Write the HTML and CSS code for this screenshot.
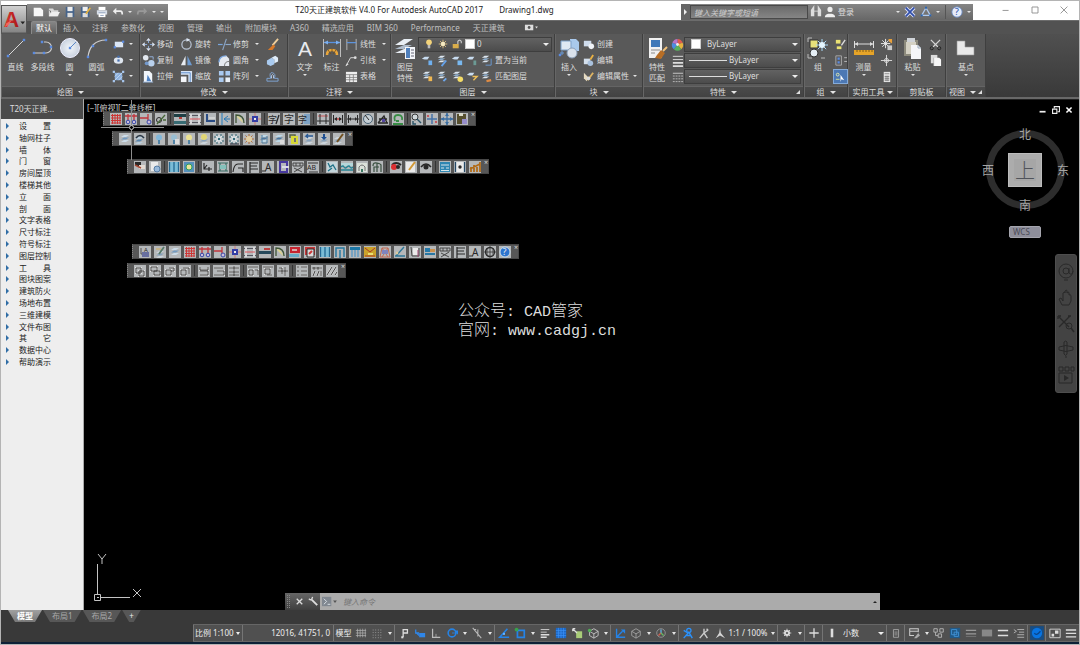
FILE: index.html
```html
<!DOCTYPE html>
<html lang="zh-CN">
<head>
<meta charset="utf-8">
<title>T20天正建筑软件 V4.0 For Autodesk AutoCAD 2017</title>
<link rel="stylesheet" href="styles.css">
<script src="icons.js" defer></script>
</head>
<body>
<div class="window">
  <header class="top">
    <button class="app" aria-label="应用程序菜单">
      <svg viewBox="0 0 26 26" width="24" height="25"><defs><linearGradient id="red" x2="1"><stop offset="0" stop-color="#e2382f"/><stop offset="1" stop-color="#a5171b"/></linearGradient></defs><text x="2" y="20" font-family="Liberation Sans" font-weight="bold" font-size="23" fill="url(#red)">A</text><path d="M3 20l4-2 4-6-6 4z" fill="#f0675c"/><path d="M20 14h5l-2.500 3z" fill="#222"/></svg>
    </button>
    <div class="titlebar">
      <nav class="qat" data-tools="new open save saveas print undo dd redo dd dd2"></nav>
      <h1 class="title"><span>T20天正建筑软件 V4.0 For Autodesk AutoCAD 2017</span><span>Drawing1.dwg</span></h1>
      <div class="info">
        <button class="tri-r" aria-label="展开"></button>
        <input class="search" type="text" aria-label="搜索" placeholder="键入关键字或短语">
        <button data-icon="binoc" aria-label="查找"></button>
        <button class="login" data-icon="user"><span>登录</span></button>
        <button class="ar" aria-label="登录菜单"></button>
        <button data-icon="exch" aria-label="应用商店"></button>
        <button data-icon="a360" aria-label="A360"></button><button class="ar" aria-label="更多"></button>
        <span class="vsep"></span>
        <button data-icon="help" aria-label="帮助"></button><button class="ar" aria-label="帮助菜单"></button>
      </div>
      <div class="winbtns"><button data-icon="wmin" aria-label="最小化"></button><button data-icon="wmax" aria-label="最大化"></button><button data-icon="wclose" aria-label="关闭"></button></div>
    </div>
    <nav class="tabs">
      <button class="on">默认</button><button>插入</button><button>注释</button><button>参数化</button><button>视图</button><button>管理</button><button>输出</button><button>附加模块</button><button>A360</button><button>精选应用</button><button>BIM 360</button><button>Performance</button><button>天正建筑</button><button class="rec" data-icon="rec" aria-label="最小化功能区"></button>
    </nav>
  </header>

  <main class="ribbon">
    <section class="panel draw">
      <div class="body">
        <button class="big" data-icon="line"><span>直线</span></button>
        <button class="big" data-icon="pline"><span>多段线</span></button>
        <button class="big drop" data-icon="circle"><span>圆</span></button>
        <button class="big drop" data-icon="arc"><span>圆弧</span></button>
        <div class="col"><button class="sm drop" data-icon="rect" aria-label="矩形"></button><button class="sm drop" data-icon="ellipse" aria-label="椭圆"></button><button class="sm drop" data-icon="hatch" aria-label="图案填充"></button></div>
      </div>
      <button class="foot drop">绘图</button>
    </section>
    <section class="panel modify">
      <div class="body">
        <div class="col"><button class="sm" data-icon="move"><span>移动</span></button><button class="sm" data-icon="copy"><span>复制</span></button><button class="sm" data-icon="stretch"><span>拉伸</span></button></div>
        <div class="col"><button class="sm" data-icon="rotate"><span>旋转</span></button><button class="sm" data-icon="mirror"><span>镜像</span></button><button class="sm" data-icon="scale"><span>缩放</span></button></div>
        <div class="col"><button class="sm drop" data-icon="trim"><span>修剪</span></button><button class="sm drop" data-icon="fillet"><span>圆角</span></button><button class="sm drop" data-icon="array"><span>阵列</span></button></div>
        <div class="col"><button class="sm" data-icon="erase" aria-label="删除"></button><button class="sm" data-icon="explode" aria-label="分解"></button><button class="sm" data-icon="offset" aria-label="偏移"></button></div>
      </div>
      <button class="foot drop">修改</button>
    </section>
    <section class="panel note">
      <div class="body">
        <button class="big drop" data-icon="text"><span>文字</span></button>
        <button class="big" data-icon="dim"><span>标注</span></button>
        <div class="col"><button class="sm drop" data-icon="linear"><span>线性</span></button><button class="sm drop" data-icon="leader"><span>引线</span></button><button class="sm" data-icon="table"><span>表格</span></button></div>
      </div>
      <button class="foot drop">注释</button>
    </section>
    <section class="panel layers">
      <div class="body">
        <button class="big" data-icon="layerprop"><span>图层<br>特性</span></button>
        <div class="col grow">
          <label class="combo"><i data-icon="bulb"></i><i data-icon="sun"></i><i data-icon="lock"></i><i class="swatch"></i><select aria-label="图层"><option>0</option></select></label>
          <div class="row"><span class="tools" data-tools="l1 l2 l3 l4"></span><button class="sm" data-icon="l5"><span>置为当前</span></button></div>
          <div class="row"><span class="tools" data-tools="l6 l7 l8 l9"></span><button class="sm" data-icon="l10"><span>匹配图层</span></button></div>
        </div>
      </div>
      <button class="foot drop">图层</button>
    </section>
    <section class="panel block">
      <div class="body">
        <button class="big drop" data-icon="insert"><span>插入</span></button>
        <div class="col"><button class="sm" data-icon="bcreate"><span>创建</span></button><button class="sm" data-icon="bedit"><span>编辑</span></button><button class="sm drop" data-icon="battr"><span>编辑属性</span></button></div>
      </div>
      <button class="foot drop">块</button>
    </section>
    <section class="panel props">
      <div class="body">
        <button class="big" data-icon="match"><span>特性<br>匹配</span></button>
        <div class="col"><i data-icon="wheel"></i><i data-icon="weights"></i><i data-icon="ltypes"></i></div>
        <div class="col grow">
          <label class="combo"><i class="swatch"></i><select aria-label="颜色"><option>ByLayer</option></select></label>
          <label class="combo"><i class="rule"></i><select aria-label="线宽"><option>ByLayer</option></select></label>
          <label class="combo"><i class="rule"></i><select aria-label="线型"><option>ByLayer</option></select></label>
        </div>
      </div>
      <button class="foot drop corner">特性</button>
    </section>
    <section class="panel group">
      <div class="body">
        <button class="big" data-icon="group"><span>组</span></button>
        <div class="col"><button class="sm" data-icon="g1" aria-label="取消编组"></button><button class="sm" data-icon="g2" aria-label="组编辑"></button><button class="sm lit" data-icon="g3" aria-label="组选择"></button></div>
      </div>
      <button class="foot drop">组</button>
    </section>
    <section class="panel utils">
      <div class="body">
        <button class="big drop" data-icon="measure"><span>测量</span></button>
        <div class="col"><button class="sm" data-icon="quick" aria-label="快速选择"></button><button class="sm" data-icon="point" aria-label="点"></button><button class="sm" data-icon="calc" aria-label="计算器"></button></div>
      </div>
      <button class="foot drop">实用工具</button>
    </section>
    <section class="panel clip">
      <div class="body">
        <button class="big drop" data-icon="paste"><span>粘贴</span></button>
        <div class="col"><button class="sm" data-icon="cut" aria-label="剪切"></button><button class="sm" data-icon="copyclip" aria-label="复制"></button></div>
      </div>
      <button class="foot">剪贴板</button>
    </section>
    <section class="panel view">
      <div class="body"><button class="big drop" data-icon="base"><span>基点</span></button></div>
      <button class="foot drop corner">视图</button>
    </section>
  </main>

  <div class="work">
    <aside class="side">
      <h2>T20天正建...</h2>
      <ul>
        <li><a href="#">设 置</a></li><li><a href="#">轴网柱子</a></li><li><a href="#">墙 体</a></li><li><a href="#">门 窗</a></li><li><a href="#">房间屋顶</a></li><li><a href="#">楼梯其他</a></li><li><a href="#">立 面</a></li><li><a href="#">剖 面</a></li><li><a href="#">文字表格</a></li><li><a href="#">尺寸标注</a></li><li><a href="#">符号标注</a></li><li><a href="#">图层控制</a></li><li><a href="#">工 具</a></li><li><a href="#">图块图案</a></li><li><a href="#">建筑防火</a></li><li><a href="#">场地布置</a></li><li><a href="#">三维建模</a></li><li><a href="#">文件布图</a></li><li><a href="#">其 它</a></li><li><a href="#">数据中心</a></li><li><a href="#">帮助演示</a></li>
      </ul>
    </aside>
    <div class="canvas">
      <span class="vp">[−][俯视][二维线框]</span>
      <div class="bar b1" data-tools="grid axis axis2 node | wall1 wall2 wall3 door1 arcd col1 | cn1 cn2 cn3 | dim1 dim2 dim3 ang dim4 green | find cross1 cross2 clipb"></div>
      <div class="bar b2" data-tools="lay lay2 | lbulb lbulb2 ybulb ybulb2 snow snow2 sunny ice ice2 ylock lup ldown lpen"></div>
      <div class="bar b3" data-tools="hand page | win pic | lead1 lead2 lead3 flag ta inb dtab ab | map wave arch tree | redeye notep eye | tbl video chart"></div>
      <div class="bar b4" data-tools="cfg pen lay grid axis axis2 col1 wall2 wall4 arcd red1 red2 win door2 stair yel roof lpen2 note blu dtab flag ta glob qm"></div>
      <div class="bar b5" data-tools="s1 s2 s3 s4 | s5 s6 s7 | s8 s9 s10 | s11 s12 s13"></div>
      <svg class="cross" width="64" height="60" viewBox="0 0 64 60"><g stroke="#8c8c8c" fill="none"><path d="M30.500 0v25M30.500 30v30M0 27.500h28M33 27.500h30"/><circle cx="30.500" cy="27.500" r="2" stroke="#ccc"/></g></svg>
      <div class="mdi"><button data-icon="mmin" aria-label="最小化"></button><button data-icon="mres" aria-label="还原"></button><button data-icon="mclose" aria-label="关闭"></button></div>
      <div class="cube"><span class="n">北</span><span class="w">西</span><button>上</button><span class="e">东</span><span class="s">南</span></div>
      <button class="wcs">WCS</button>
      <div class="navbar" data-tools="wheelnav pan zoomx orbit motion"></div>
      <p class="mark"><b>公众号</b>: CAD<b>管家</b><br><b>官网</b>: www.cadgj.cn</p>
      <svg class="ucs" width="52" height="54" viewBox="0 0 52 54"><g fill="none" stroke="#c4c4c4"><path d="M4.500 14v30M8 47.500h29M1.500 44.500h6v6h-6zM4 47.500h2"/><path d="M5 4l4 5 4-5M9 9v5M40 39l8 8M48 39l-8 8"/></g></svg>
      <div class="cmd"><span class="grip"></span><button data-icon="cx" aria-label="关闭"></button><button data-icon="wrench" aria-label="自定义"></button><label><i data-icon="prompt"></i><input type="text" placeholder="键入命令" aria-label="命令"></label><button class="up" aria-label="历史"></button></div>
    </div>
  </div>

  <footer class="bottom">
    <nav class="sheets"><button class="on">模型</button><button>布局1</button><button>布局2</button><button>+</button></nav>
    <div class="status">
      <label class="cell"><select class="scale" aria-label="比例"><option>比例 1:100</option></select></label>
      <output class="cell coords">12016, 41751, 0</output>
      <button class="cell">模型</button>
      <span class="tools" data-tools="sgrid sdots ar | snap dyn ortho polar ar iso ar | otrack osnap ar lw tran cyc osn3 ar | ducs cubeo ar gizmo ar | man1 man2 man3"></span>
      <button class="zoom">1:1 / 100%</button>
      <span class="tools" data-tools="ar | gear ar | plus | unit"></span>
      <label class="cell plain"><select class="units" aria-label="单位"><option>小数</option></select></label>
      <span class="tools" data-tools="| quickp | isoobj ar nodes bluesq li1 li2 li3 li4 | ball | full menu"></span>
    </div>
  </footer>
</div>
</body>
</html>
```
FILE: styles.css
```css
* { box-sizing: border-box; }
body { margin: 0; background: #b4b4b4; font: 8px/10px "Noto Sans", "Noto Sans CJK SC", sans-serif; color: #dedede; }
button, input, select { font: inherit; color: inherit; background: none; border: 0; padding: 0; margin: 0; appearance: none; border-radius: 0; }
button { display: flex; align-items: center; justify-content: center; white-space: nowrap; flex: none; }
svg { display: block; flex: none; overflow: visible; }
i { display: block; flex: none; font-style: normal; }
.window { min-height: 100vh; display: flex; flex-direction: column; padding: 1px; }

/* title and tabs */
.top { display: grid; grid-template-columns: 26px 1fr; grid-template-rows: 19px 14px; background: #fff; }
.app { grid-row: 1 / 3; align-self: stretch; margin-top: 4px; background: linear-gradient(#d0d0d0, #858585 26px, #555 27px); border: 1px solid #555; border-bottom: 0; }
.titlebar { display: flex; padding-top: 3px; }
.qat { display: flex; align-items: center; width: 141px; padding-left: 3px; background: linear-gradient(#8a8a8a, #6b6b6b); }
.qat button { width: 16px; }
.qat .ar { width: 8px; }
.title { flex: 1; display: flex; justify-content: center; gap: 16px; margin: 0; font: inherit; line-height: 12px; color: #1c1c1c; }
.info { display: flex; align-items: center; width: 292px; background: linear-gradient(#858585, #676767); }
.info button { width: 16px; height: 16px; }
.info .ar { width: 8px; }
.info .tri-r { width: 9px; background: #656565; }
.tri-r::before { content: ""; border: 3px solid transparent; border-left-color: #eee; border-right: 0; }
.search { width: 118px; height: 14px; padding: 0 3px; border: 1px solid #494949; background: linear-gradient(#6a6a6a, #858585); }
.search::placeholder { color: #ccc; font-style: italic; opacity: 1; }
.info .login { width: 33px; justify-content: flex-start; gap: 2px; margin-right: auto; }
.vsep { width: 1px; height: 14px; margin: 0 3px; background: #555; }
.winbtns { display: flex; justify-content: space-around; width: 106px; padding: 0 0 4px 18px; }
.tabs { display: flex; background: #525252; border-top: 1px solid #6c6c6c; padding-left: 4px; }
.tabs button { padding: 0 7px 0 6px; color: #c0c0c0; }
.tabs .on { color: #fff; padding: 0 4px; background: linear-gradient(#858585, #606060); border: 1px solid #8a8a8a; border-bottom: 0; border-radius: 2px 2px 0 0; }
.tabs .rec { margin-left: 6px; }
.drop::after, .ar::before { content: ""; border: 2px solid transparent; border-top: 2px solid #e4e4e4; border-bottom: 0; flex: none; }

/* ribbon */
.ribbon { display: flex; height: 65px; background: linear-gradient(#505050, #393939); border-bottom: 2px solid #686868; }
.panel { flex: none; display: flex; flex-direction: column; background: #595959; border-right: 1px solid #3f3f3f; border-left: 1px solid #666; }
.body { flex: 1; display: flex; padding-top: 2px; }
.foot { height: 11px; gap: 5px; line-height: 10px; background: linear-gradient(#4b4b4b, #424242); border-top: 1px solid #646464; }
.foot.drop::after { border-width: 3px 3px 0; }
.corner { position: relative; }
.corner::before { content: ""; position: absolute; right: 3px; bottom: 3px; border: 4px solid transparent; border-width: 4px 0 0 4px; border-bottom: 4px solid #ddd; border-top: 0; }
.big { width: 26px; flex-direction: column; justify-content: flex-start; line-height: 11px; padding-top: 1px; }
.big svg { margin-bottom: 2px; }
.big.drop::after { margin-top: 2px; }
.col { display: grid; grid-auto-rows: 16px; height: 48px; align-items: center; }
.col i svg { margin: auto; }
.grow { flex: 1; }
.sm { justify-content: flex-start; gap: 2px; }
.sm.drop::after { margin-left: 4px; }
.row { display: flex; align-items: center; }
.tools { display: flex; align-items: center; }
.lit { background: #4c78b4; outline: 1px solid #85abd9; }
.combo { display: flex; align-items: center; height: 15px; padding-left: 4px; gap: 2px; border: 1px solid #3e3e3e; background: linear-gradient(#626262, #4c4c4c); position: relative; }
.combo select { flex: 1; min-width: 0; height: 13px; }
.combo::after, .cell:has(select)::after { content: ""; position: absolute; right: 2px; border: 3px solid transparent; border-top-color: #eee; border-bottom: 0; pointer-events: none; }
.swatch { width: 10px; height: 10px; background: #fff; border: 1px solid #ccc; }
.rule { width: 38px; height: 1px; background: #ddd; }
.draw { width: 139px; }
.draw .big { width: 27px; }
.draw .col { margin-left: 2px; }
.draw .sm.drop::after { margin-left: 2px; }
.modify { width: 148px; }
.modify .body { gap: 7px; padding-left: 1px; }
.note { width: 103px; }
.note .big { width: 27px; }
.note .body { padding-left: 2px; }
.layers { width: 164px; }
.layers .body { padding-right: 2px; }
.layers .row .tools button { width: 15px; }
.layers .row { padding-left: 2px; }
.block { width: 88px; }
.block .sm.drop::after { margin-left: 2px; }
.props { width: 161px; }
.props .body { padding-right: 2px; }
.props .col:nth-child(2) { width: 14px; }
.props .swatch { margin: 0 4px 0 2px; }
.group { width: 44px; }
.group .body, .utils .body, .clip .body { justify-content: space-between; }
.utils { width: 49px; }
.utils .big { width: 29px; }
.utils .col, .clip .col { margin-right: 3px; }
.utils .foot { gap: 2px; }
.clip { width: 49px; }
.clip .big { width: 29px; }
.view { width: 40px; }
.view .big { width: 38px; }
.view .foot { justify-content: flex-start; padding-left: 2px; }

/* work area */
.work { flex: 1; display: flex; background: #000; }
.side { width: 83px; background: #eee; border-right: 1px solid #aaa; color: #222; }
.side h2 { margin: 0; height: 20px; padding: 5px 0 0 9px; font: inherit; color: #ddd; background: #4b4b4b; }
.side ul { display: grid; grid-auto-rows: 1fr; height: 248px; margin: 1px 0 0; padding: 0; list-style: none; }
.side li { display: flex; align-items: center; gap: 10px; padding-left: 5px; }
.side li::before { content: ""; border: 3px solid transparent; border-left: 3px solid #2f6da5; border-right: 0; }
.side a { width: 32px; color: inherit; text-decoration: none; text-align-last: justify; white-space: nowrap; }
.canvas { flex: 1; position: relative; min-height: 510px; overflow: hidden; border-top: 1px solid #222; }
.canvas > * { position: absolute; }
.vp { left: 3px; top: 3px; color: #ccc; }
.bar { display: flex; align-items: center; gap: 3px; height: 15px; padding: 0 7px 0 6px; background: #575757; border: 1px solid #474747; border-left: 1px dotted #888; }
.bar button, .bar svg { width: 12px; height: 12px; }
.bar svg { opacity: .88; }
.bar .sep { width: 1px; height: 11px; background: #333; margin: 0; }
.bar::after { content: "×"; position: absolute; right: 0; top: 0; font-size: 7px; line-height: 6px; color: #ddd; }
.b1 { left: 19px; top: 11px; }
.b2 { left: 28px; top: 31px; }
.b3 { left: 43px; top: 59px; }
.b4 { left: 48px; top: 144px; }
.b5 { left: 43px; top: 163px; }
.cross { left: 17px; top: 0; }
.mdi { right: 4px; top: 4px; display: flex; }
.mdi button { width: 13px; height: 12px; }
.cube { right: 14px; top: 30px; width: 79px; height: 79px; border: 7px solid #2d2d2d; border-radius: 50%; color: #a5a5a5; font: 12px/14px "Noto Sans CJK SC", sans-serif; }
.cube > * { position: absolute; }
.cube button { left: 15px; top: 16px; width: 34px; height: 34px; background: #a6a6a6; border: 1px solid #bcbcbc; color: #50535a; font-size: 20px; font-weight: 300; box-shadow: inset 0 0 0 5px #acacac; }
.cube .n { left: 26px; top: -10px; }
.cube .s { left: 26px; bottom: -10px; }
.cube .w { left: -11px; top: 26px; }
.cube .e { right: -11px; top: 26px; }
.wcs { right: 38px; top: 126px; width: 32px; height: 12px; padding-left: 3px; justify-content: flex-start; border-radius: 2px; background: #8e8e9a; border: 1px solid #a5a5ae; color: #4b4b58; }
.navbar { right: 2px; top: 154px; width: 22px; height: 139px; padding: 8px 0; border-radius: 3px; background: #434343; border: 1px solid #4e4e4e; display: flex; flex-direction: column; align-items: center; justify-content: space-between; }
.mark { left: 374px; top: 203px; margin: 0; font: 15px/19px "Liberation Mono", "Noto Sans CJK SC", monospace; color: #ddd; white-space: nowrap; }
.mark b { font-size: 16px; font-weight: 300; }
.ucs { left: 9px; bottom: 6px; }
.cmd { left: 201px; right: 199px; bottom: 0; height: 17px; display: flex; align-items: center; background: linear-gradient(#666, #3f3f3f); }
.cmd .grip { width: 3px; height: 13px; margin: 0 2px; border: 1px dotted #888; }
.cmd button { width: 14px; }
.cmd label { flex: 1; align-self: stretch; display: flex; align-items: center; gap: 8px; padding-left: 2px; background: #ababab; }
.cmd input { flex: 1; }
.cmd input::placeholder { color: #777; font-style: italic; opacity: 1; }
.cmd .up { align-self: stretch; width: 10px; background: #ababab; }
.up::before { content: ""; border: 2px solid transparent; border-bottom: 2px solid #222; border-top: 0; }

/* sheets and status */
.bottom { background: #393939; border-bottom: 2px solid #0d2036; height: 34px; display: flex; flex-direction: column; justify-content: space-between; }
.sheets { display: flex; padding-left: 7px; gap: 1px; }
.sheets button { height: 12px; padding: 0 9px; background: #575757; clip-path: polygon(0 0, 100% 0, calc(100% - 7px) 100%, 7px 100%); color: #a8a8a8; }
.sheets .on { background: linear-gradient(#a0a0a0, #777); color: #fff; font-weight: bold; }
.sheets button:last-child { padding: 0 7px; color: #eee; }
.status { align-self: flex-end; display: flex; align-items: center; height: 18px; background: #505050; border-top: 1px solid #666; border-bottom: 1px solid #666; color: #eee; width: calc(100% - 192px); }
.status .cell { position: relative; display: flex; align-items: center; height: 16px; border-left: 1px solid #757575; }
.status .plain { border-left: 0; }
.scale { width: 48px; padding-left: 1px; }
.cell:has(.scale)::after { border-width: 3px 2px 0; }
.coords { flex: 1; justify-content: flex-end; padding-right: 3px; }
.status button.cell { width: 20px; }
.status .tools button { width: 16px; height: 16px; }
.status .tools .ar { width: 9px; }
.status .tools .ar::before { border-width: 3px 2px 0; }
.status .sep { width: 2px; height: 16px; border-left: 1px solid #747474; }
.zoom { width: 40px; }
.units { width: 46px; padding-left: 3px; }
```
FILE: icons.js
```javascript
const p = (d, s = '#ddd', w = 1, f = 'none') => `<path d="${d}" stroke="${s}" stroke-width="${w}" fill="${f}"/>`;
const f = (d, c = '#ddd') => `<path d="${d}" fill="${c}"/>`;
const c = (x, y, r, fill = 'none', s = 'none', w = 1) => `<circle cx="${x}" cy="${y}" r="${r}" fill="${fill}" stroke="${s}" stroke-width="${w}"/>`;
const t = (s, x, y, z, fill = '#222') => `<text x="${x}" y="${y}" font-size="${z}" fill="${fill}">${s}</text>`;
const dots = (a, col = '#5b8be0') => a.map(([x, y]) => f(`M${x - 1.2} ${y - 1.2}h2.4v2.4h-2.4z`, col)).join('');
const stack = (x, y, a = '#dce6ef', b = '#8babc9') => f(`M${x} ${y + 2}l3-2h5l-3 2z`, a) + f(`M${x} ${y + 4.5}l3-2h5l-3 2z`, b) + f(`M${x} ${y + 7}l3-2h5l-3 2z`, a);
const flake = p('M6 2v8M2 6h8M3 3l6 6M9 3l-6 6', '#f4fbff', 1.2) + p('M4 1v2M8 1v2M1 4h2M9 4h2M1 8h2M9 8h2M4 9v2M8 9v2', '#2d6b7c') + c(6, 6, 1.2, '#2d6b7c');
const star = (x, y, r, col) => p(`M${x} ${y - r}v${2 * r}M${x - r} ${y}h${2 * r}M${x - r * .7} ${y - r * .7}l${r * 1.4} ${r * 1.4}M${x + r * .7} ${y - r * .7}l${-r * 1.4} ${r * 1.4}`, col);

/* 22-unit icons, large ribbon buttons */
const big = {
  line: p('M3 19L19 3', '#d7d7d7') + dots([[3, 19], [19, 3]]),
  pline: p('M2 16h12a5 5 0 000-11h-2', '#cfcfcf', 1.2) + dots([[2, 16], [12, 16], [10, 5], [19, 10]]),
  circle: `<defs><radialGradient id="cg"><stop offset="0" stop-color="#f3f6fa"/><stop offset="1" stop-color="#c9d2df"/></radialGradient></defs>` + c(11, 11, 9.5, 'url(#cg)', '#eef') + p('M11 11l6-6', '#5a86c5') + dots([[11, 11]]),
  arc: p('M2 20C3 10 9 3 20 3', '#cfcfcf', 1.2) + dots([[2, 20], [7, 9], [20, 3]]),
  text: `<text x="4" y="19" font-family="Liberation Sans" font-size="21" fill="#e8eaee">A</text>`,
  dim: p('M2.500 2v18M19.500 2v18', '#bdbdbd') + p('M3 5.500h16', '#5791e0', 1.3) + f('M3 5.500l4-2v4zM19 5.500l-4-2v4z', '#7cb0f0') + p('M6 18q0-5 5-5t5 5', '#e9a63a', 2.5) + p('M11 11v4M7 13l3 4M15 13l-3 4', '#6b4b20', .8),
  layerprop: f('M1 8l9-6h9l-9 6z', '#e8eef4') + f('M1 12l9-4h8l-8 4z', '#aebccc') + f('M1 16l9-4h7l-7 4z', '#e8eef4') + f('M11 10h10v12H11z', '#f4f6fa') + f('M12 11h4v10h-4z', '#4f80bd') + p('M17 13h3M17 16h3M17 19h3', '#667'),
  insert: f('M12 2h6l3 3v9H12z', '#a9c9ec') + f('M3 4h10v9H3z', '#dfe8f2') + p('M3 4h10v9H3z', '#7fa1c9') + c(14, 16, 5, '#d9e1eb', '#8ba0ba') + dots([[2, 18]]) + p('M4 14v4M2 16h4', '#6b98d1'),
  match: f('M3 1h13v20H3z', '#f1f1f1') + f('M5 3h9v7H5z', '#3f78b8') + p('M5 13h9M5 16h4', '#8b8b8b') + f('M11 18l4-5 4 3-4 6-6-1z', '#b86e25') + p('M17 14l4-4', '#f3c27a', 2),
  group: f('M3 3h8v8H3z', '#e6e27a') + p('M3 3h8v8H3z', '#343434') + c(7, 16, 4, '#e5eef5', '#333') + star(15, 8, 6, '#a9d9f7') + c(15, 8, 3, '#e5f6ff') + p('M1 1h4M1 1v4M1 17v4M1 21h4M14 21h4', '#bbb'),
  measure: p('M1.500 4v7M20.500 4v7M2 7h18', '#dedede') + f('M2 7l3-2v4zM20 7l-3-2v4z') + f('M1 13h20v5H1z', '#e6a428') + p('M4 13v2M7 13v2M10 13v2M13 13v2M16 13v2M19 13v2', '#6b4b10', .8),
  paste: f('M2 3h14v16H2z', '#8c8a7c') + f('M4 5h10v12H4z', '#d4d1c3') + f('M5 1h8v4H5z', '#cfd3d8') + f('M9 8h7l3 3v11H9z', '#f5f6f8') + p('M16 8v3h3', '#9ab'),
  base: f('M2 4h8v6h9v8H2z', '#e9e9e9') + p('M2 4h8v6h9v8H2z', '#999', .6)
};

/* 14-unit icons, small ribbon, title and status buttons */
const small = {
  new: f('M2 2h8l3 3v7H2z', '#f6f6f6'), open: f('M1 3h5l1 2h5v7H1z', '#d9d9d9') + p('M2 5l3 5', '#555') + f('M4 7h10l-3 5H1z', '#eee'),
  save: f('M2 1h10v12H2z', '#46648b') + f('M4 1h6v5H4z', '#eee') + f('M4 8h6v5H4z', '#ddd'), saveas: f('M1 1h10v12H1z', '#46648b') + f('M3 1h6v5H3z', '#eee') + f('M3 8h6v5H3z', '#ddd') + p('M7 9l5-7', '#e5b13c', 2),
  print: f('M3 1h8v4H3z', '#fff') + f('M1 5h12v5H1z', '#d7dee8') + f('M3 8h8v5H3z', '#fff') + p('M3 8h8M5 11h4', '#7f95b5'),
  undo: f('M1 6l4-4v8z', '#eee') + p('M4 6h6q2 0 2 4', '#eee', 2), redo: f('M13 6L9 2v8z', '#999') + p('M10 6H4Q2 6 2 10', '#999', 2),
  binoc: p('M2 12V5l2-3v10M12 12V5l-2-3v10', '#ddd', 2) + p('M4 6h6', '#ddd'), user: c(7, 4, 3, '#eee') + f('M1 13q0-3 4-4h4q4 1 4 4z', '#eee'),
  exch: p('M2 2l10 10M12 2L2 12', '#dfe3ff', 4) + p('M2 2l10 10M12 2L2 12', '#2f4ea8', 2), a360: p('M7 2l5 9H2z', '#aecaf0', 1.5) + dots([[7, 2], [2, 11], [12, 11]], '#2e65ad'),
  help: c(7, 7, 6, '#e7ecf8', '#6788c2') + t('?', 4.300, 11, 11, '#2856b0'),
  wmin: p('M3 7.500h7', '#888'), wmax: p('M3.500 3.500h7v7h-7z', '#888'), wclose: p('M3 3l8 8M11 3l-8 8', '#888'),
  rec: f('M1 4h9v6H1z', '#ddd') + c(5.500, 7, 1.5, '#555') + f('M12 6h3l-1.500 2z'),
  rect: f('M3 4h9v6H3z', '#dbe6f5') + dots([[3, 10], [12, 4]]), ellipse: `<ellipse cx="7" cy="7" rx="5" ry="3.5" fill="#dfe6ef"/>` + dots([[7, 7], [7, 3]], '#476fae'),
  hatch: f('M3 3h8v8H3z', '#8eb2df') + p('M3 11l8-8M3 7l4-4M7 11l4-4', '#d1e1f5', .8) + dots([[2, 2], [12, 2], [2, 12], [12, 12]], '#a8c7ee'),
  move: f('M7 0l2.500 3h-5zM7 14l2.500-3h-5zM0 7l3-2.500v5zM14 7l-3-2.500v5z', '#dfe6f2') + p('M7 3v8M3 7h8', '#8eaede') + c(7, 7, 1.5, '#555'),
  copy: c(4, 4, 3, '#e3e8ef') + c(10, 10, 3.5, '#b8d0ec') + p('M8 3h4v3', '#95b2dd') + c(5, 10, 2, '#7298cb'),
  stretch: f('M2 1h6l3 3v9H2z', '#f1f5fa') + f('M6 5l4 7H5z', '#4f82c3') + p('M1 13h11', '#9bb9df'),
  rotate: c(7, 7, 5, 'none', '#b9c4d5', 1.3) + f('M7 0l4 2-4 2z', '#dce5f1'),
  mirror: f('M6 2v10H1z', '#e9edf3') + f('M8 2v10h5z', '#6d9bd2'), scale: f('M1 1h12v12h-4V5H1z', '#d7e5f6') + f('M1 7h6v6H1z', '#f4f6f9') + p('M1 3h10v10', '#5788c8'),
  trim: p('M0 7h5', '#78a6de', 1.3) + p('M9 1L5 13', '#8ca8ca', 1.2) + p('M8 7h6', '#8ca8ca', 1.2), fillet: f('M1 13V9q0-7 8-7l3 3v8z', '#e5e9ef') + p('M1 9q0-7 8-7', '#7da8e0', 1.5) + p('M7 13q0-5 5-5', '#777'),
  array: f('M1 1h5v5H1zM8 1h5v5H8zM1 8h5v5H1z', '#a9c9ef') + f('M8 8h5v5H8z', '#e9eff6'),
  erase: p('M13 1L7 8', '#f0cf9c', 2) + f('M8 7l-6 6h5l3-4z', '#d87928'), explode: f('M1 7l5-3 3 2v5l-4 2-4-2z', '#a9caef') + f('M6 4l4-2 3 2v4l-4 2V6z', '#e0edfa'),
  offset: p('M1 12h12V9H9q2-5-2-6T5 9H1z', '#7fa6d8') + p('M6 9q-1-4 1-4t1 4', '#bcd1ed'),
  linear: p('M2 1v12M12 1v12', '#bbb') + p('M2 5h10', '#5d96e2', 1.3), leader: p('M1 13L6 4h4', '#ddd') + c(11, 4, 1.5, '#ddd') + f('M1 13l3-2-2-1z'), table: f('M1 2h12v11H1z', '#eee') + p('M1 5h12M1 8h12M1 10.500h12M5 5v8M9 5v8', '#777', .8),
  bulb: c(7, 5, 3.3, '#f3d37a') + f('M5.500 8h3v4h-3z', '#bbb'), sun: star(7, 7, 5, '#e2c37e') + c(7, 7, 2.5, '#f5eac2'), lock: f('M2 7h7v5H2z', '#d9ad4a') + p('M8 7V4q2-3 4 0v2', '#ccc', 1.3),
  bcreate: f('M2 3h8v6H2z', '#cfdcec') + c(10, 9, 3, '#eef2f7'), bedit: f('M2 5h7v6H2z', '#d4dfec') + c(9, 10, 3, '#a9c1dd') + p('M9 6l3-5', '#e9b144', 2), battr: f('M2 3l5 5-2 4-3-3z', '#e5d9c0') + p('M6 11l6-8', '#ddb463', 2) + c(7, 9, 2, '#ddd'),
  wheel: f('M7 7V1a6 6 0 015.500 4z', '#e05b4e') + f('M7 7l5.500-2A6 6 0 0111 12z', '#e7b33f') + f('M7 7l4 5a6 6 0 01-8 0z', '#59b25e') + f('M7 7l-4 5A6 6 0 011.500 5z', '#4c8de0') + f('M7 7L1.500 5A6 6 0 017 1z', '#b974c6') + c(7, 7, 1.5, '#eee'),
  weights: p('M2 2.500h11M2 6h11', '#ddd') + p('M2 9.500h11M2 13h11', '#ddd', 2), ltypes: p('M2 3.500h11', '#ccc') + `<g stroke-dasharray="2 1">${p('M2 6.500h11M2 9.500h11M2 12.500h11', '#bbb')}</g>`,
  g1: f('M2 2h5v4H2z', '#eae173') + f('M3 9h5v3H3z', '#eae173') + p('M12 2l-4 6', '#ddd', 1.5), g2: p('M2 2h6v10H2z', '#aaa') + p('M11 4h3M11 8h3', '#bbb') + dots([[5, 5], [5, 9]]), g3: c(4, 5, 1.5, 'none', '#e4edae') + f('M7 5l4 6-3-1-1 3z', '#fff') + p('M2 10h4', '#d6e19c'),
  quick: star(6, 6, 5, '#eee') + f('M9 1h4v5l-3-2z', '#e8a13d') + f('M8 8h5v5H8z', '#ccc'), point: p('M7 1v12M1 7h12', '#ddd') + c(7, 7, 2.2, 'none', '#ddd'), calc: f('M4 2h7v11H4z', '#e5e5e5') + p('M5 4h5M5 7h5M5 9h5M5 11h5M6.500 6v6M8.500 6v6', '#666', .7),
  cut: p('M2 2l8 8M12 2l-8 8', '#d5d5d5', 1.3) + c(3, 11, 1.7, 'none', '#222') + c(11, 11, 1.7, 'none', '#222'), copyclip: f('M2 1h7v9H2z', '#ddd') + f('M5 4h6l2 2v7H5z', '#f7f7f7') + p('M5 4v9', '#888', .5),
  mmin: p('M3 9h7', '#eee', 2), mres: p('M3 6h5v5H3zM5 5V3h6v6H9', '#eee', 1.3), mclose: p('M4 4l6 6M10 4l-6 6', '#fff', 1.8),
  cx: p('M4 4l6 6M10 4l-6 6', '#ddd', 1.4), wrench: p('M5 5l6 6', '#ddd', 2) + p('M2 4q3 3 4-2', '#ddd', 1.4), prompt: f('M0 2h10v10H0z', '#808790') + p('M2 4l3 3-3 3M6 10h3', '#dfe6ec') + f('M12 6h4l-2 2.500z', '#555'),
  sgrid: p('M3 2v10M6 2v10M9 2v10M12 2v10M1 4h12M1 7h12M1 10h12', '#b5b5b5', .8), sdots: `<g stroke-dasharray="1 2">${p('M2 3.500h11M2 6.500h11M2 9.500h11M2 12.500h11', '#aaa')}</g>`,
  snap: p('M6 12V3h5v4H6', '#ddd', 1.5) + dots([[5, 12]], '#ddd'), dyn: p('M2 3v4h4M3 7l3 3', '#2f86e8', 1.5) + f('M6 7h7v5H6z', '#2f86e8'), ortho: p('M3 2v10h9', '#bbb', 1.4) + p('M7 8v4', '#aaa'),
  polar: c(7, 7, 4.5, 'none', '#2583e6', 1.8) + p('M7 7h6', '#2583e6') + f('M10 4h4v5z', '#2583e6'), iso: p('M2 1l10 12M8 3v8M3 3h3', '#bbb', 1.2),
  otrack: p('M13 12H2L11 2', '#2583e6', 1.8) + dots([[7, 8]], '#65b3ff'), osnap: p('M4 4h8v8H4z', '#2583e6', 2) + c(3, 3, 2.2, '#38a34a'), lw: p('M2 3h10M2 6h7', '#ddd') + p('M2 9h10M2 12h7', '#ddd', 1.7), tran: f('M1 1h12v12H1z', '#1d68c4') + p('M1 4h12M1 7h12M1 10h12M4 1v12M7 1v12M10 1v12', '#3a94fa', .8),
  cyc: f('M6 5h7v8H6z', '#a9cc78') + p('M2 2l5 5M2 2h3M2 2v3', '#ddd', 1.4), osn3: p('M8 2l5 3v5l-5 3-5-3V5zM3 5l5 3 5-3M8 8v5', '#ccc') + c(3, 4, 2, '#4fad56'),
  ducs: p('M3 2v10h10M3 12l7-7', '#2583e6', 1.6) + f('M8 3h5v5z', '#2583e6'), cubeo: p('M7 2l5 3v5l-5 3-5-3V5zM2 5l5 3 5-3M7 8v5', '#a5a5a5'), gizmo: c(7, 7, 5, 'none', '#999') + p('M7 7V3', '#66b5e8', 1.5) + p('M7 7l-3 3', '#d25d4e', 1.5) + p('M7 7l3 3', '#67b862', 1.5),
  man1: c(8, 4, 2.5, 'none', '#2b91fa', 1.5) + p('M2 4l5 3M2 13l6-7 4 7M5 10h5', '#2b91fa', 1.7), man2: p('M2 13l5-6 4 6M7 2v5l4-3M10 2l2 2', '#ccc', 1.6), man3: f('M7 1l1 6 5 6-6-3-5 3 4-6z', '#d6d6d6'),
  gear: star(7, 7, 5, '#ddd') + c(7, 7, 3.5, '#ddd') + c(7, 7, 1.3, '#555'), plus: p('M7 1.500v11M1.500 7h11', '#ddd', 1.5), unit: p('M7 2v10', '#ddd', 3),
  quickp: p('M4 3h6v9H4z', '#aaa') + p('M6 5v5M8 5v5', '#999'), isoobj: p('M12 6V2H2v8h5M2 5h10', '#ccc', 1.2) + f('M7 13l5-6 2 3-4 3z', '#aaa'), nodes: p('M1 2h4v4H1zM6 8h4v4H6zM3 6v4h3M8 2h4v4H8z', '#bbb'), bluesq: f('M1 1h12v12H1z', '#215987') + p('M3 3h6v6H3zM6 6h5v5H6z', '#4294da'),
  li1: p('M1 4h12M1 8h12', '#999', 1.5) + p('M1 11h12', '#777'), li2: f('M1 3h12v8H1z', '#888'), li3: p('M1 4h12M1 10h12', '#ddd', 1.8), li4: p('M5 3h8M7 6h6M5 9h8M5 12h8M1 3l3 2-3 2', '#bbb'), ball: f('M-1-1h16v16H-1z', '#174d84') + c(7, 7, 6, '#0874e2') + p('M4 7q2 4 7-2', '#0b458a', 1.5),
  full: p('M1 2.500h12v10H1z', '#ddd') + f('M7 4h4v4H7zM3 8h3v3H3z'), menu: p('M1 3.500h12M1 7.500h12M1 11.500h12', '#ddd', 1.5)
};
for (let n = 1; n <= 10; n++) {
  small['l' + n] = ([1, 3, 4, 9].includes(n) ? f('M1 5l3-2h5l-2 3H4z', '#c8dcf0') : stack(2, 2)) +
    [f('M8 7h4v5H8z', '#6fb0ef'), p('M6 13l5-6', '#65a2ea', 2), f('M7 7h5v5H7z', '#79b8ef'), f('M8 7h3v5H8z', '#6c9a94'), p('M6 12h6V5', '#6a9cd5'), f('M8 7h4v5H8z', '#efb753'), p('M8 12l3-3', '#6fa8ed', 2), c(10, 10, 3, '#f4dc67'), p('M7 7h5l-4 4', '#efc05a', 1.5), p('M7 12l5-1', '#df8b43', 2.5)][n - 1];
}

/* 12-unit icons on a grey tile, floating toolbars */
const bulbAt = col => c(6, 4.5, 3, col) + p('M6 7v4', '#2a73a8', 1.5);
const tile = {
  grid: p('M1 2.500h10M1 5h10M1 7.500h10M1 10h10M2.500 1v10M5 1v10M7.500 1v10M10 1v10', '#de3130'), axis: p('M0 3h12M3 1v7M9 1v7', '#cf3038', 1.3) + c(3, 9, 1.8, '#dce', '#3348b5') + c(9, 9, 1.8, '#dce', '#3348b5'),
  axis2: p('M0 5h8M8 1v8', '#cf3038', 1.3) + c(9, 9, 2, '#dce', '#3348b5'), node: c(4, 7, 2.5, 'none', '#222') + p('M2 11l8-9M8 7h3', '#456b35', 1.3), wall1: f('M0 1h12v3H0z', '#173c42') + f('M5 4h3v2H5z', '#c43a34') + f('M0 8h12v3H0z', '#347078'), wall2: f('M0 2h12v1H0zM0 9h12v1H0z', '#55555f') + f('M1 1h2v10H1zM9 1h2v10H9z', '#e8e8ea') + p('M1 6h10', '#ed5358'),
  wall3: p('M3 1v7h8', '#244b8b', 2) + p('M5 5h6', '#fff'), wall4: f('M0 5h12v3H0z', '#20485c') + p('M5 3h6', '#c83d3d', 2), door1: f('M2 0h2v12H2z', '#6ea3c9') + p('M9 3L5 6l4 3M5 6h6', '#267fc3'), arcd: p('M2 10V2q8 0 8 8', '#3d5632', 1.3) + f('M3 3q5 1 6 7L3 4z', '#eee69a'), col1: p('M6 0v12M0 6h12', '#e28080') + f('M3 3h6v6H3z', '#313bb0') + f('M5 5h2v2H5z', '#fff'),
  cn1: t('字', 0, 10, 9) + p('M8 11l3-9', '#222', 1.3), cn2: t('字', 1, 10, 10), cn3: f('M6 1h6v10H6z', '#85add2') + t('字', 0, 10, 9), dim1: p('M1 3h10', '#dc5656') + p('M3 1v10M9 1v10M0 8h12', '#222'), dim2: p('M3 6h6', '#dc4242', 1.5) + p('M1.500 2v8M10.500 2v8', '#222') + f('M2 6l3-2v4zM10 6L7 4v4z', '#222'), dim3: p('M0 6h12M1.500 2v8M10.500 2v8', '#222') + f('M2 6l2-2v4zM10 6L8 4v4z', '#222'), ang: c(6, 6, 4.5, '#d5dfe6', '#466379') + p('M3 2l4 5', '#222'), dim4: p('M1 10L7 3l3 7M2 6h8M1 10h10', '#222', 1.3) + f('M5 6h3v3H5z', '#54a'), green: p('M3 8Q1 2 6 2t4 5M4 8h3M1 11h10', '#349443', 1.8),
  find: c(4, 4, 3, '#dfe9ed', '#333') + p('M6 6l4 4M2 8v3h3', '#24536a', 1.4), cross1: p('M6 1v10M1 6h10', '#4678b3', 1.5) + p('M2 2v2M10 8v2', '#d05a62', 2), cross2: p('M6 0v12M0 6h12', '#3872ad', 1.3) + f('M6 0l2 3H4zM6 12l2-3H4zM0 6l3-2v4zM12 6L9 4v4z', '#3872ad'), clipb: f('M1 1h9v10H1z', '#57502a') + f('M3 0h4v3H3z', '#eed') + f('M6 6h5v5H6z', '#9f95d8'),
  lay: stack(2, 2, '#dceefc', '#76a4cf'), lay2: stack(1, 4, '#c7deef', '#588bba') + p('M2 5q4-5 8 0', '#234', 1.6), lbulb: bulbAt('#88c5eb'), lbulb2: bulbAt('#a3cde3') + f('M7 6h4v5H7z', '#eee'), ybulb: bulbAt('#fff59b'), ybulb2: stack(2, 4) + c(6, 4, 3, '#f4e77a'), snow: flake, snow2: flake + p('M2 11h9', '#223'), sunny: star(6, 6, 5, '#b86e34') + c(6, 6, 3, '#f6dfac'), ice: stack(2, 2, '#cbe9fa', '#4b7caa') + p('M4 2v8h5V3', '#4f84ac'), ice2: stack(2, 2, '#c8e9fb', '#477aaa') + f('M7 7h4v4H7z', '#eee'), ylock: p('M2 5V2h5v3', '#5b653c', 1.5) + f('M3 3h7v8H3z', '#e9ea34') + f('M6 5h2v4H6z', '#777'),
  lup: stack(2, 4) + p('M10 3H3l2-2M3 3l2 2', '#235ba0', 1.3), ldown: stack(2, 4) + f('M6 7L3 4h2V1h2v3h2z', '#174e9a'), lpen: stack(1, 4) + p('M4 9l6-8', '#76501a', 2),
  hand: f('M1 1h6v4H1z', '#222') + f('M5 4h6v4H5z', '#f7eee5') + p('M1 4l6 3', '#b2482f', 1.5), page: f('M2 1h7v9H2z', '#fff') + c(8, 8, 3, '#a3c7ed', '#5480ae'), win: f('M1 1h10v10H1z', '#7fcbe8') + p('M6 1v10M1.500 1v10M10.500 1v10', '#1c6c9c', 1.3), pic: f('M1 1h10v10H1z', '#5598ca') + c(6, 6, 3, '#fff8a4', '#28a75e'),
  lead1: p('M2 2v6h8M2 8l3-4M7 6v4', '#222', 1.2), lead2: p('M1 2h10M1 10h10M3 2v8M9 2v8', '#346f64', 1.2) + f('M3 4h6v4H3z', '#8cd1cb'), lead3: p('M1 11q1-8 5-8h5M6 7h5v4', '#222', 1.2), flag: p('M3 1v11M3 2h8M3 5h7M3 8h8', '#222', 1.2), ta: t('A', 3, 10, 10) + p('M0 10h4', '#222'), inb: p('M3 1h7v10H3z', '#4735a8', 2) + f('M5 5h7v2H5z', '#eef'), dtab: p('M1 2h10v3H1zM4 2v3M8 2v3M2 11l8-5M2 7l8 4', '#444'), ab: t('AB', 0, 9, 7) + p('M1 2h10M2 11h9', '#333'),
  map: f('M1 1h10v10H1z', '#d2e6ed') + p('M2 2l2 4 3-2 3 5M2 10l4-3', '#18758d', 1.3), wave: f('M0 2h12v3H0z', '#c2e8eb') + p('M0 6q2-2 3 0t3 0 3 0 3 0M0 9h12', '#1f899c', 1.3), arch: f('M1 2h10v9H1z', '#eef5ed') + p('M3 10V6q3-4 6 0v4', '#777') + f('M5 8h2v3H5z', '#377c64'), tree: p('M6 2v9M2 5q0-4 4-3t4 2v7M3 11V6h5', '#344d3c', 1.2),
  redeye: p('M2 4q4-4 9 0', '#222', 2) + c(4, 6, 3, '#ef2a2e') + c(8, 6, 2, '#222'), notep: f('M1 1h9v10H1z', '#fff') + p('M4 9l6-8', '#e4a333', 2), eye: p('M1 6q5-6 10 0', '#222', 1.6) + c(6, 6, 2.5, '#222'), tbl: f('M1 1h10v10H1z', '#2a8dbe') + p('M2 4h8M2 7h3M7 7h3M2 9.500h8', '#e7faff', 1.2), video: f('M1 1h10v10H1z', '#fff') + p('M1.500 1v10M10.500 1v10', '#1d4768', 1.3) + c(6, 6, 1.7, '#222'), chart: p('M2 11V6M5 11V4M8 11V6M11 11V1M1 8l10-5', '#be7012', 1.8),
  cfg: p('M2 2v6h7', '#555') + f('M3 6h7v5H3z', '#6b73aa') + t('A', 5, 6, 6), pen: stack(2, 5) + p('M10 1L5 8', '#557d6b', 1.8) + p('M2 3h5', '#e0b957'), red1: f('M1 1h10v6H1z', '#d51f2b') + p('M3 4h5', '#eee', 1.5) + f('M0 8h10v3H0z', '#6ab9d9'), red2: f('M1 1h10v8H1z', '#d83436') + f('M3 3h7v8H3z', '#eee') + p('M3 3h7v8H3z', '#222') + p('M5 8l3-3', '#d33', 2), door2: p('M2 11V2h8v9M6 4v8', '#1c7caa', 1.4), stair: f('M1 1h10v3H1z', '#147bb0') + p('M3 4v7M6 4v7M9 4v7', '#65a5d1', 1.5), yel: f('M0 1h12v10H0z', '#dcae26') + p('M1 2l5 4 5-4M1 10h10', '#b23420') + f('M4 7h5v2H4z', '#fff579'), roof: p('M1 11l2-9h6l2 9zM3 2l6 9M9 2l-6 9', '#cf6950') + f('M3 4h6v4H3z', '#858bcd'),
  lpen2: p('M2 10l8-9M1 10h10', '#267ba1', 1.4) + dots([[3, 7]], '#eda'), note: p('M2 1l1 9h7V2', '#444') + f('M4 2h5v7H4z', '#fff') + p('M9 4v7', '#a64775'), blu: f('M1 2h5v4H1z', '#1f7eb5') + f('M6 3h5v3H6z', '#dc994d') + p('M1 8h10', '#227cae', 2), glob: c(6, 6, 4.5, 'none', '#222', 1.3) + p('M6 0v12M0 6h12M3 2v8M9 2v8', '#333', .8), qm: c(6, 6, 5, '#2879df', '#d8eeff') + t('?', 3.600, 9, 9, '#fff')
};
['M2 3h5v5H2zM5 6h5v5H5z', 'M2 2h6v4H2zM5 6h6v4H5z', 'M2 10V5h5v5zM7 6h3V3H5', 'M2 10V5h5v5zM4 3h6v6', 'M2 2v3h8V2M2 6h8v4H2', 'M1 3h9M4 6h7v4H1', 'M1 3h10M1 7h10M6 1v10M1 10h10', 'M1 2h10M2 5h4v5H2zM8 5h3v5', 'M1 2h10M3 4h5v5H3zM5 10h5', 'M1 6h10M2 3h3v6M8 2v9', 'M1 2h2M5 2h6M1 6h2M5 6h6M1 10h2M5 10h6', 'M1 3h10M3 2v3M7 2v3M2 11l2-5M6 11l2-5M10 11V6', 'M1 10l5-8M5 10l5-8M9 10l2-3'].forEach((d, n) => {
  tile['s' + (n + 1)] = p(d, '#f1f1f1', 2) + p(d, '#3c3c3c', 1);
});

/* 18-unit icons, navigation bar */
const nav = {
  wheelnav: c(9, 8, 7, 'none', '#292929') + c(9, 8, 3, 'none', '#292929') + p('M12 5v5q3 3 4-2M7 17h4', '#292929'),
  pan: p('M5 16l-3-6 2-1 2 3V4q2-2 2 0V2q2-2 2 0v2q2-2 2 0v2q2-1 2 1v5l-2 4z', '#292929'),
  zoomx: p('M2 2l10 10M2 12L13 1M1 1h3M1 1v3M14 1h-3', '#292929', 1.3) + c(12, 11, 3, 'none', '#292929') + p('M14 13l3 4', '#292929', 1.5),
  orbit: p('M7 2q2-2 3 0v12q-1 3-3 0zM2 7q7-3 14 0v3q-7 3-14 0zM8 17h2', '#292929'),
  motion: p('M2 1h4v4H2zM8 1h4v4H8zM14 1h3v4h-3zM2 7h13v10H2z', '#292929') + f('M7 9l5 3-5 3z', '#292929')
};

const draw = (body, box, size, bg) => `<svg width="${size}" height="${size}" viewBox="0 0 ${box} ${box}" font-family="Noto Sans, Noto Sans CJK SC">${bg ? f('M0 0h12v12H0z', '#c3c6c8') : ''}${body}</svg>`;
const icon = n => big[n] ? draw(big[n], 22, 22) : small[n] ? draw(small[n], 14, 13) : tile[n] ? draw(tile[n], 12, 12, true) : draw(nav[n], 18, 18);

document.querySelectorAll('[data-tools]').forEach(el => {
  el.innerHTML = el.dataset.tools.split(' ').map(n => n === '|' ? '<span class="sep"></span>' : n.startsWith('dd') || n === 'ar' ? '<button class="ar" aria-label="更多"></button>' : `<button aria-label="${n}">${icon(n)}</button>`).join('');
});
document.querySelectorAll('[data-icon]').forEach(el => el.insertAdjacentHTML('afterbegin', icon(el.dataset.icon)));
document.querySelectorAll('.info svg, .winbtns svg, .mdi svg, .status svg, .qat svg, .combo svg').forEach(s => { s.setAttribute('width', 12); s.setAttribute('height', 12); });
```
